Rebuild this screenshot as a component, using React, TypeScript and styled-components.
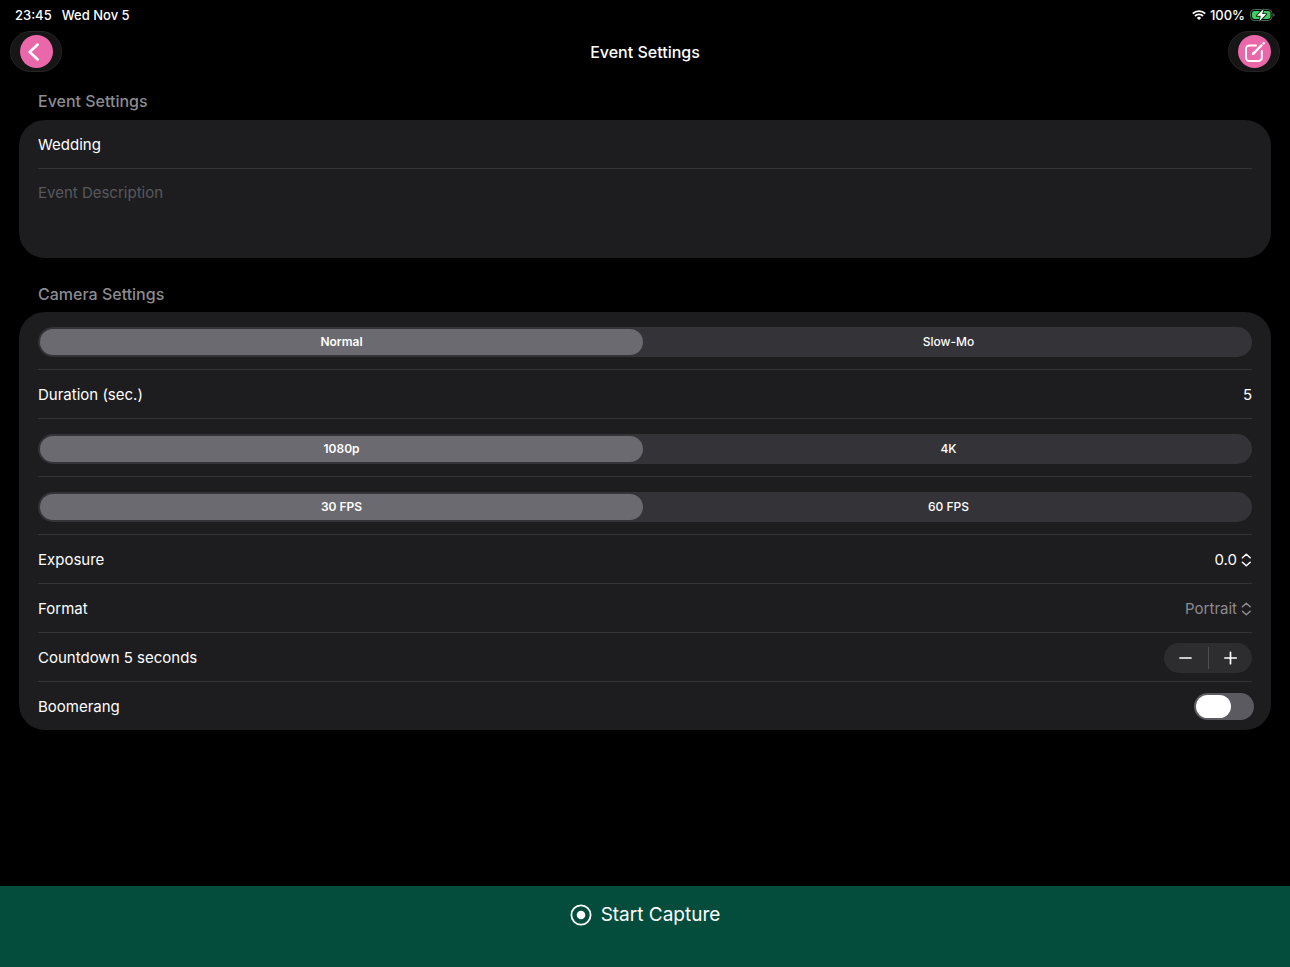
import React, { useState } from 'react';
import styled, { createGlobalStyle } from 'styled-components';

const GlobalStyle = createGlobalStyle`
  *, *::before, *::after { box-sizing: border-box; }
  body {
    margin: 0;
    background: #000;
    color: #fff;
    font-family: Inter, "Liberation Sans", sans-serif;
    font-size: 16px;
    line-height: 20px;
  }
  button, input, select, textarea { font: inherit; color: inherit; }
`;

const Page = styled.div`
  display: flex;
  flex-direction: column;
  min-height: 100vh;
`;

const StatusBar = styled.div`
  display: flex;
  align-items: center;
  justify-content: space-between;
  height: 31px;
  padding: 0 15px 2px;
  font-size: 13px;
  font-weight: 500;
`;

const StatusGroup = styled.div<{ $gap: number }>`
  display: flex;
  align-items: center;
  gap: ${(p) => p.$gap}px;
`;

const NavBar = styled.header`
  display: grid;
  grid-template-columns: 52px 1fr 52px;
  align-items: center;
  padding: 0 10px;
`;

const Title = styled.h1`
  margin: 0;
  font-size: 16px;
  font-weight: 500;
  text-align: center;
`;

const NavButton = styled.button`
  display: flex;
  align-items: center;
  justify-content: center;
  height: 41px;
  padding: 0;
  border: 1px solid #252526;
  border-radius: 21px;
  background: #161617;
`;

const PinkDisc = styled.span`
  display: flex;
  align-items: center;
  justify-content: center;
  width: 33px;
  height: 33px;
  border-radius: 50%;
  background: #ea68a9;
`;

const Main = styled.main`
  flex: 1;
  padding: 0 19px;
`;

const SectionTitle = styled.h2<{ $top: number; $bottom: number }>`
  margin: 0;
  padding: ${(p) => p.$top}px 19px ${(p) => p.$bottom}px;
  color: #8b8b91;
  font-size: 16px;
  font-weight: 500;
`;

const Card = styled.section`
  padding: 0 19px;
  border-radius: 26px;
  background: #1d1d1f;
`;

const Row = styled.div`
  display: flex;
  align-items: center;
  justify-content: space-between;
  height: 49px;
  padding-top: 1px;
  border-bottom: 1px solid #343436;
  font-size: 15px;

  &:last-child {
    height: 48px;
    border-bottom: 0;
  }
`;

const TextField = styled.input<{ $align?: string }>`
  flex: 1;
  min-width: 0;
  padding: 0;
  border: 0;
  outline: 0;
  background: none;
  text-align: ${(p) => p.$align ?? 'left'};
`;

const Description = styled.textarea`
  display: block;
  width: 100%;
  height: 89px;
  padding: 14px 0;
  border: 0;
  outline: 0;
  resize: none;
  background: none;
  font-size: 15px;

  &::placeholder { color: #58585c; opacity: 1; }
`;

const SegmentRow = styled.div`
  padding: 15px 0 12px;
  border-bottom: 1px solid #343436;
`;

const SegmentTrack = styled.fieldset`
  display: grid;
  grid-template-columns: 1fr 1fr;
  margin: 0;
  padding: 0;
  border: 0;
  border-radius: 15px;
  background: #333338;
`;

const SegmentOption = styled.label`
  position: relative;
  display: flex;
  padding: 2px;
  font-size: 12px;
  font-weight: 500;
`;

const SegmentInput = styled.input`
  position: absolute;
  inset: 0;
  margin: 0;
  opacity: 0;
`;

const SegmentPill = styled.span`
  flex: 1;
  height: 26px;
  border-radius: 13px;
  line-height: 26px;
  text-align: center;

  ${SegmentInput}:checked + & {
    background: #6b6a70;
    font-weight: 600;
  }
`;

const Picker = styled.span<{ $muted?: boolean }>`
  display: flex;
  align-items: center;
  gap: 4px;
  color: ${(p) => (p.$muted ? '#8b8b91' : '#fff')};
`;

const PickerSelect = styled.select`
  appearance: none;
  field-sizing: content;
  padding: 0;
  border: 0;
  outline: 0;
  background: none;
`;

const Stepper = styled.div`
  display: flex;
  align-items: center;
  height: 30px;
  border-radius: 15px;
  background: #2d2d2f;
`;

const StepButton = styled.button`
  display: flex;
  align-items: center;
  justify-content: center;
  width: 44px;
  height: 22px;
  padding: 0;
  border: 0;
  background: none;

  & + & { border-left: 1px solid #4e4e51; }
`;

const Switch = styled.input`
  appearance: none;
  width: 60px;
  height: 27px;
  margin: 0 -2px 0 0;
  padding: 2px;
  border-radius: 14px;
  background: #5b5a60;

  &::before {
    content: "";
    display: block;
    width: 35px;
    height: 23px;
    border-radius: 12px;
    background: #fff;
  }
  &:checked { background: #34c759; }
  &:checked::before { margin-left: auto; }
`;

const CaptureButton = styled.button`
  display: flex;
  justify-content: center;
  align-items: center;
  gap: 9px;
  padding: 17px 0 40px;
  border: 0;
  background: #044d3d;
  font-size: 19px;
  line-height: 24px;
`;

const WifiIcon = () => (
  <svg width="14" height="10" viewBox="0 0 14 10" fill="none" stroke="#fff" strokeWidth="1.8">
    <path d="M0.8 3.6a8.8 8.8 0 0 1 12.4 0" />
    <path d="M3 6a5.7 5.7 0 0 1 8 0" />
    <path d="M7 10 4.9 7.9a3 3 0 0 1 4.2 0z" fill="#fff" stroke="none" />
  </svg>
);

const BatteryIcon = () => (
  <svg width="26" height="14" viewBox="0 0 26 14">
    <rect x="1.5" y="1.5" width="21.5" height="11" rx="3.8" fill="none" stroke="#4f6b57" />
    <rect x="3" y="3" width="18.5" height="8" rx="2.4" fill="#3fcb60" />
    <path d="M24.4 5.2c1.5.6 1.5 3 0 3.6z" fill="#7a7a7a" />
    <path
      d="M14.6 0.9 7.8 7.8h4L10.4 13.3l6.9-7.2h-4.1z"
      fill="#fff"
      stroke="#0c2413"
      strokeWidth="1.8"
      strokeLinejoin="round"
      paintOrder="stroke"
    />
  </svg>
);

const BackIcon = () => (
  <svg width="20" height="20" viewBox="0 0 20 20" fill="none" stroke="#fff" strokeWidth="2.7" strokeLinecap="round" strokeLinejoin="round">
    <path d="M11.7 2.6 3.7 10l8 7.4" />
  </svg>
);

const ComposeIcon = () => (
  <svg width="23" height="23" viewBox="0 0 23 23" fill="none" stroke="#fff" strokeWidth="2" strokeLinecap="round" strokeLinejoin="round">
    <path d="M13 5.4H6.4a3.4 3.4 0 0 0-3.4 3.4v8.9a3.4 3.4 0 0 0 3.4 3.4h9a3.4 3.4 0 0 0 3.4-3.4V11" />
    <path d="m10.3 13.6 8.2-8.2" strokeWidth="2.3" />
    <path d="m10 12.3-.9 2.5 2.5-.9z" fill="#fff" strokeWidth="0.6" />
    <path d="m20.5 3.4.3-.3" strokeWidth="2.3" />
  </svg>
);

const UpDownIcon = () => (
  <svg width="11" height="14" viewBox="0 0 11 14" fill="none" stroke="currentColor" strokeWidth="1.5" strokeLinecap="round" strokeLinejoin="round">
    <path d="M1.4 4.8 5.3 1.3l3.9 3.5M1.4 9.2l3.9 3.5 3.9-3.5" />
  </svg>
);

const MinusIcon = () => (
  <svg width="14" height="14" viewBox="0 0 14 14" stroke="#fff" strokeWidth="1.7" strokeLinecap="round">
    <path d="M1 7h11" />
  </svg>
);

const PlusIcon = () => (
  <svg width="14" height="14" viewBox="0 0 14 14" stroke="#fff" strokeWidth="1.7" strokeLinecap="round">
    <path d="M0.8 7h11.4M6.5 1.3v11.4" />
  </svg>
);

const RecordIcon = () => (
  <svg width="22" height="22" viewBox="0 0 22 22">
    <circle cx="11" cy="11" r="9.6" fill="none" stroke="#fff" strokeWidth="1.8" />
    <circle cx="11" cy="11" r="4.3" fill="#fff" />
  </svg>
);

function Segmented({ name, options }: { name: string; options: string[] }) {
  const [value, setValue] = useState(options[0]);
  return (
    <SegmentRow>
      <SegmentTrack aria-label={name}>
        {options.map((option) => (
          <SegmentOption key={option}>
            <SegmentInput type="radio" name={name} checked={value === option} onChange={() => setValue(option)} />
            <SegmentPill>{option}</SegmentPill>
          </SegmentOption>
        ))}
      </SegmentTrack>
    </SegmentRow>
  );
}

export default function App() {
  const [countdown, setCountdown] = useState(5);
  return (
    <Page>
      <GlobalStyle />
      <StatusBar>
        <StatusGroup $gap={10}>
          <span>23:45</span>
          <span>Wed Nov 5</span>
        </StatusGroup>
        <StatusGroup $gap={4}>
          <WifiIcon />
          <span>100%</span>
          <BatteryIcon />
        </StatusGroup>
      </StatusBar>
      <NavBar>
        <NavButton aria-label="Back"><PinkDisc><BackIcon /></PinkDisc></NavButton>
        <Title>Event Settings</Title>
        <NavButton aria-label="Edit"><PinkDisc><ComposeIcon /></PinkDisc></NavButton>
      </NavBar>
      <Main>
        <SectionTitle $top={19} $bottom={9}>Event Settings</SectionTitle>
        <Card>
          <Row>
            <TextField aria-label="Event name" defaultValue="Wedding" />
          </Row>
          <Description aria-label="Event description" placeholder="Event Description" />
        </Card>
        <SectionTitle $top={26} $bottom={8}>Camera Settings</SectionTitle>
        <Card>
          <Segmented name="speed" options={['Normal', 'Slow-Mo']} />
          <Row>
            <label htmlFor="duration">Duration (sec.)</label>
            <TextField id="duration" $align="right" inputMode="numeric" defaultValue="5" />
          </Row>
          <Segmented name="resolution" options={['1080p', '4K']} />
          <Segmented name="frame rate" options={['30 FPS', '60 FPS']} />
          <Row>
            <label htmlFor="exposure">Exposure</label>
            <Picker>
              <PickerSelect id="exposure"><option>0.0</option></PickerSelect>
              <UpDownIcon />
            </Picker>
          </Row>
          <Row>
            <label htmlFor="format">Format</label>
            <Picker $muted>
              <PickerSelect id="format"><option>Portrait</option></PickerSelect>
              <UpDownIcon />
            </Picker>
          </Row>
          <Row>
            <span>Countdown {countdown} seconds</span>
            <Stepper>
              <StepButton aria-label="Decrease" onClick={() => setCountdown(Math.max(0, countdown - 1))}><MinusIcon /></StepButton>
              <StepButton aria-label="Increase" onClick={() => setCountdown(countdown + 1)}><PlusIcon /></StepButton>
            </Stepper>
          </Row>
          <Row>
            <label htmlFor="boomerang">Boomerang</label>
            <Switch id="boomerang" type="checkbox" />
          </Row>
        </Card>
      </Main>
      <CaptureButton>
        <RecordIcon />
        Start Capture
      </CaptureButton>
    </Page>
  );
}
